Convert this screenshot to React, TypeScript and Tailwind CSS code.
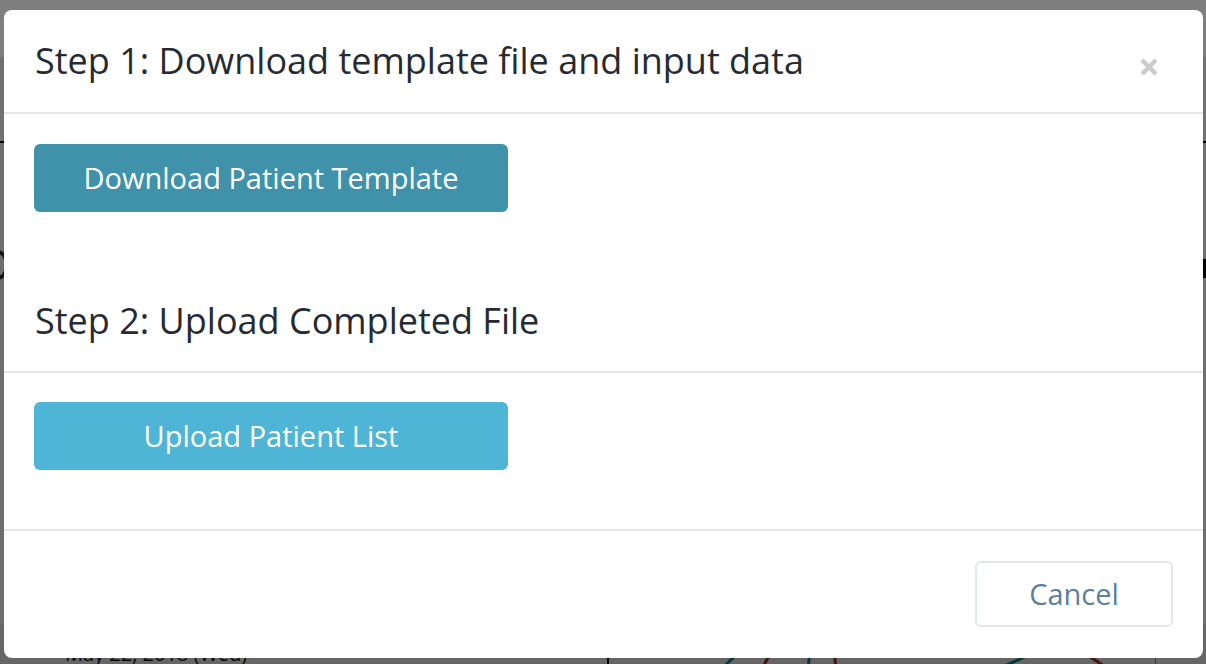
import React from "react";

function CloseIcon() {
  return (
    <svg width="20" height="20" viewBox="0 0 20 20" aria-hidden="true">
      <path d="M3 3 L17 17 M17 3 L3 17" stroke="#cccccc" strokeWidth="4.5" strokeLinecap="butt" />
    </svg>
  );
}

export default function App() {
  return (
    <div
      className="relative w-[1206px] h-[664px] overflow-hidden bg-[#dcdcdc]"
      style={{ fontFamily: '"Open Sans", "Liberation Sans", sans-serif' }}
    >
      {/* page behind the modal */}
      <div className="h-[57px] bg-white" />
      <div className="h-[86px] bg-[#e2e2e2] border-b-2 border-black" />
      <div className="absolute left-[-14px] top-[250px] w-[22px] h-[30px] rounded-full border-4 border-[#1f2a3a]" />
      <div className="absolute right-0 top-[259px] w-[4px] h-[19px] bg-black" />
      <div className="absolute left-0 bottom-0 w-full h-[40px] bg-[#cccccc]" />
      <div className="absolute left-[65px] top-[644px] text-[20px] leading-[20px] text-[#111]">May 22, 2018 (Wed)</div>
      <div className="absolute left-[607px] top-[640px] w-[2px] h-[30px] bg-black" />
      <div className="absolute left-[1155px] top-[640px] w-[1px] h-[30px] bg-[#777]" />
      <svg className="absolute left-[700px] top-[650px]" width="420" height="20" viewBox="0 0 420 20">
        <path d="M22 20 C30 8 40 2 50 0" stroke="#0f6f78" strokeWidth="3" fill="none" />
        <path d="M62 20 C66 10 70 4 74 0" stroke="#8a2222" strokeWidth="3" fill="none" />
        <path d="M108 20 L110 0" stroke="#0f6f78" strokeWidth="3" fill="none" />
        <path d="M136 20 L134 0" stroke="#8a2222" strokeWidth="3" fill="none" />
        <path d="M300 18 L340 0" stroke="#0f6f78" strokeWidth="3" fill="none" />
        <path d="M380 0 L410 20" stroke="#8a2222" strokeWidth="3" fill="none" />
      </svg>

      {/* backdrop */}
      <div className="absolute inset-0 bg-black/50" />

      {/* modal */}
      <div className="absolute left-[4px] top-[10px] w-[1199px] h-[648px] bg-white rounded-[8px] flex flex-col">
        <div className="h-[104px] border-b-2 border-[#e4e7ea] flex items-center justify-between px-[31px]">
          <h4 className="text-[36px] text-[#262b31] leading-none">Step 1: Download template file and input data</h4>
          <button className="mt-[12px] mr-[13px]">
            <CloseIcon />
          </button>
        </div>

        <div className="px-[30px] pt-[30px] pb-[59px]">
          <button className="w-[474px] h-[68px] rounded-[6px] bg-[#3f92aa] text-white text-[29px]">
            Download Patient Template
          </button>
        </div>

        <div className="h-[102px] border-b-2 border-[#e4e7ea] flex items-center px-[31px]">
          <h4 className="text-[36px] text-[#262b31] leading-none">Step 2: Upload Completed File</h4>
        </div>

        <div className="px-[30px] pt-[29px] pb-[59px] border-b-2 border-[#e4e7ea]">
          <button className="w-[474px] h-[68px] rounded-[6px] bg-[#4fb5d6] text-white text-[29px]">
            Upload Patient List
          </button>
        </div>

        <div className="flex justify-end px-[30px] pt-[30px]">
          <button className="w-[198px] h-[66px] rounded-[6px] border-2 border-[#e1e6eb] bg-white text-[#5a7f9f] text-[29px]">
            Cancel
          </button>
        </div>
      </div>
    </div>
  );
}
